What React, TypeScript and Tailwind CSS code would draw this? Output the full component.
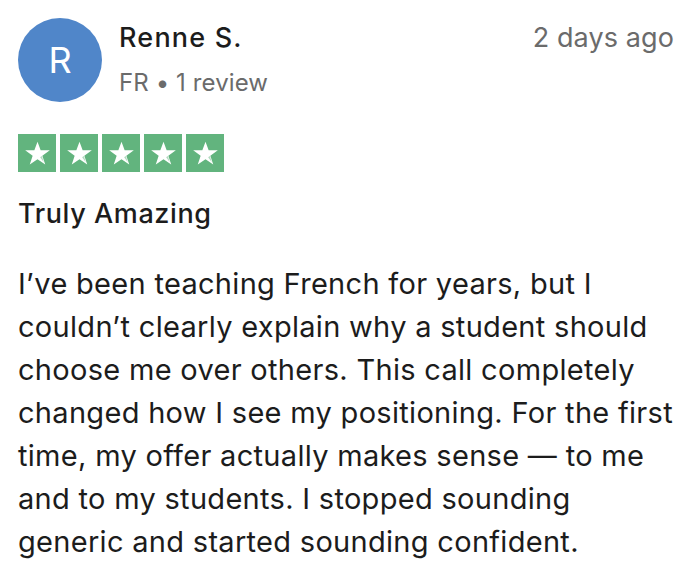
import React from "react";

function Star() {
  return (
    <div className="w-[38px] h-[38px] bg-[#62b47e] flex items-center justify-center">
      <svg viewBox="0 0 24 24" className="w-[29px] h-[29px]">
        <path
          d="M12 2.2l2.6 7.2h7.6l-6.2 4.5 2.4 7.3L12 16.7l-6.4 4.5 2.4-7.3-6.2-4.5h7.6z"
          fill="#ffffff"
        />
        <path d="M14.2 15.2l1.4-1.1 1.6 5.1z" fill="#62b47e" opacity="0.5" />
      </svg>
    </div>
  );
}

const lines = [
  "I’ve been teaching French for years, but I",
  "couldn’t clearly explain why a student should",
  "choose me over others. This call completely",
  "changed how I see my positioning. For the first",
  "time, my offer actually makes sense — to me",
  "and to my students. I stopped sounding",
  "generic and started sounding confident.",
];

export default function App() {
  const font = { fontFamily: "Inter, 'Noto Sans', sans-serif" };
  return (
    <div className="w-[694px] h-[572px] bg-white px-[18px] pt-[18px] overflow-hidden" style={font}>
      <div className="flex items-start">
        <div className="w-[84px] h-[84px] rounded-full bg-[#5086c9] flex items-center justify-center text-white text-[36px] leading-none">
          R
        </div>
        <div className="ml-[17px] flex-1">
          <div className="text-[27px] leading-[40px] font-medium text-[#1c1c1c] tracking-[1.2px]">Renne S.</div>
          <div className="text-[24px] leading-[36px] text-[#6b6b6b] mt-[7px] tracking-[0.1px]">FR • 1 review</div>
        </div>
        <div className="text-[27px] leading-[40px] text-[#6b6b6b] tracking-[0.1px] mr-[2px]">2 days ago</div>
      </div>
      <div className="flex gap-[4px] mt-[32px]">
        <Star />
        <Star />
        <Star />
        <Star />
        <Star />
      </div>
      <div className="mt-[22px] text-[27px] leading-[40px] font-medium text-[#1c1c1c] tracking-[0.6px]">Truly Amazing</div>
      <p className="mt-[28px] text-[29px] leading-[43px] text-[#1c1c1c] tracking-[0.3px] whitespace-nowrap">
        {lines.map((l) => (
          <span key={l} className="block">
            {l}
          </span>
        ))}
      </p>
    </div>
  );
}
